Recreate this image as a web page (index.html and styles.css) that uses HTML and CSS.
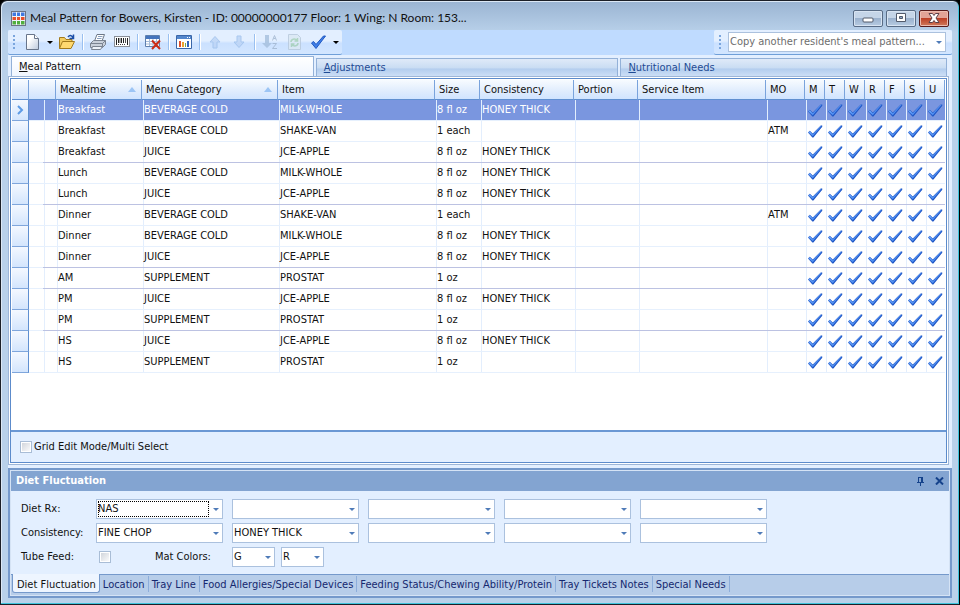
FILE: index.html
```html
<!DOCTYPE html>
<html lang="en">
<head>
    <meta charset="UTF-8">
    <meta name="viewport" content="width=device-width, initial-scale=1.0">
    <title>Meal Pattern for Bowers, Kirsten</title>
    <link rel="stylesheet" href="styles.css">
</head>
<body>
    <div class="window">
        <header class="title-bar">
            <svg class="app-icon" width="15" height="15" viewBox="0 0 15 15">
                <rect width="15" height="15" fill="#6b7385"/>
                <rect x="1" y="1" width="13" height="13" fill="#f0f3f9"/>
                <path d="M1.5 1.5H5V5H1.500zM6 1.500h3V5H6zM10 1.500h3.500V5H10z" fill="#3f78e0"/>
                <path d="M1.500 6H5v3H1.500zM6 6h3v3H6zM10 6h3.500v3H10z" fill="#e8502c"/>
                <path d="M1.500 10H5v3.500H1.500zM6 10h3v3.500H6zM10 10h3.500v3.500H10z" fill="#4fae3c"/>
            </svg>
            <h1>Meal Pattern for Bowers, Kirsten - ID: 00000000177 Floor: 1 Wing: N Room: 153...</h1>
            <div class="window-buttons">
                <button type="button" aria-label="Minimize">
                    <svg width="16" height="12" viewBox="0 0 16 12"><rect x="3" y="6" width="10" height="4" rx="1" fill="#fff" stroke="#525a6b"/></svg>
                </button>
                <button type="button" aria-label="Maximize">
                    <svg width="16" height="12" viewBox="0 0 16 12"><path d="M3.5 1.5h9v8h-9z" fill="#fff" stroke="#525a6b"/><path d="M6.5 4.5h3v2h-3z" fill="#8fa9c8" stroke="#525a6b"/></svg>
                </button>
                <button type="button" class="close" aria-label="Close">
                    <svg width="16" height="12" viewBox="0 0 16 12"><path d="M3 1.5h3.5L8 3.5l1.5-2H13L10 6l3 4.5H9.5L8 8.5l-1.5 2H3L6 6z" fill="#fff" stroke="#5c4048"/></svg>
                </button>
            </div>
        </header>

        <main class="content">
            <div class="toolbars">
                <div class="toolbar">
                    <span class="grip"></span>
                    <button type="button" aria-label="New">
                        <svg width="16" height="16" viewBox="0 0 16 16"><path d="M2.5.5h8l4 4v11h-12z" fill="url(#paper)" stroke="#68758b"/><path d="M10.5.5v4h4" fill="#fff" stroke="#68758b"/></svg>
                    </button>
                    <button type="button" class="caret" aria-label="New options"></button>
                    <button type="button" aria-label="Open">
                        <svg width="16" height="16" viewBox="0 0 16 16"><path d="M.5 14.5v-11h5l1.5 2h6v3" fill="#f3cd62" stroke="#a27a1c"/><path d="M.5 14.5l3-7h12l-3.5 7z" fill="#ffd970" stroke="#a27a1c"/><path d="M9 3c1.5-2 3.5-2 5 .5M14.5.5v4h-4" fill="none" stroke="#1d4fa8" stroke-width="1.5"/></svg>
                    </button>
                    <span class="separator"></span>
                    <button type="button" aria-label="Print">
                        <svg width="16" height="16" viewBox="0 0 16 16"><path d="M4.5 7L7 .5h7.5L12 7z" fill="#fff" stroke="#6c7787"/><path d="M8 2.5h4.5M7 4.5h4.5" stroke="#8aa0c0"/><path d="M.5 9.5l3-3h12v4l-3 3H.5z" fill="#c9d0da" stroke="#7a8390"/><path d="M.5 9.5h12l3-3M12.5 9.5v4" fill="none" stroke="#7a8390"/><path d="M2.5 12.5l-1 3h9l2-3z" fill="#edf2f9" stroke="#7a8390"/></svg>
                    </button>
                    <button type="button" aria-label="Barcode">
                        <svg width="16" height="16" viewBox="0 0 16 16"><rect x=".5" y="2.5" width="15" height="10" fill="#fff" stroke="#8a8f98"/><path d="M2.5 4v7M4.5 4v5M7.5 4v5M9.5 4v5M13.5 4v7" stroke="#222"/><path d="M6 4v5M11.5 4v5" stroke="#555"/><path d="M4 10.5h8" stroke="#444" stroke-dasharray="1 1"/></svg>
                    </button>
                    <span class="separator"></span>
                    <button type="button" aria-label="Delete row">
                        <svg width="16" height="16" viewBox="0 0 16 16"><path d="M.5 1.5h14v11H.5z" fill="#fff" stroke="#5d7fae"/><path d="M1 2h13v3H1z" fill="#4474bd"/><path d="M1 7.5h13M1 10h13M4.5 5v7M8 5v7M11.5 5v7" stroke="#a5bbd8"/><path d="M7 6.5l8 8.5M15 6.5L7 15" stroke="#cc2a13" stroke-width="2"/></svg>
                    </button>
                    <span class="separator"></span>
                    <button type="button" aria-label="Report">
                        <svg width="16" height="16" viewBox="0 0 16 16"><path d="M.5 1.5h15v13H.5z" fill="#fff" stroke="#3a66a8"/><path d="M1 2h14v3H1z" fill="#5386cc"/><path d="M11 3.5h1M13 3.5h1" stroke="#fff"/><path d="M3 7h2v6H3z" fill="#e0502a"/><path d="M6 8h2v5H6z" fill="#eda02d"/><path d="M9 9h1v4H9z" fill="#78a84a"/><path d="M11 7h2v6h-2z" fill="#3465bd"/></svg>
                    </button>
                    <span class="separator"></span>
                    <button type="button" aria-label="Move up" disabled>
                        <svg width="16" height="16" viewBox="0 0 16 16"><path d="M8 2.5l5 5.5h-3v6H6V8H3z" fill="#bcd4f6" stroke="#9cbfec"/></svg>
                    </button>
                    <button type="button" aria-label="Move down" disabled>
                        <svg width="16" height="16" viewBox="0 0 16 16"><path d="M8 13.5L3 8h3V2h4v6h3z" fill="#bcd4f6" stroke="#9cbfec"/></svg>
                    </button>
                    <span class="separator"></span>
                    <button type="button" aria-label="Sort" disabled>
                        <svg width="16" height="16" viewBox="0 0 16 16"><path d="M3 1h4v8h3l-5 5-5-5h3z" fill="#a5bfdd"/><path d="M10.5 6.5l2-5 2 5M11.5 4.5h2M10.5 9.5h4l-4 5H15" fill="none" stroke="#9fb4ce"/></svg>
                    </button>
                    <button type="button" aria-label="Refresh" disabled>
                        <svg width="16" height="16" viewBox="0 0 16 16"><path d="M2.5.5h9l3 3v12h-12z" fill="#dbe8f3" stroke="#b7c8da"/><path d="M5 8c0-3 4-4 6-1.5M11.5 4v3h-3M12 9c0 3-4 4-6 1.5M5.5 13v-3h3" fill="none" stroke="#a3cfb4" stroke-width="1.5"/></svg>
                    </button>
                    <button type="button" aria-label="Apply">
                        <svg width="16" height="16" viewBox="0 0 16 16"><path d="M1.500 9L3.500 7.500 6 10.500l7.500-8.500h2L6 14.500z" fill="#3f7fe8" stroke="#1f57c0"/></svg>
                    </button>
                    <button type="button" class="caret" aria-label="Apply options"></button>
                </div>
                <div class="toolbar copy-bar">
                    <span class="grip"></span>
                    <div class="combo">
                        <select aria-label="Copy another resident's meal pattern"><option>Copy another resident's meal pattern...</option></select>
                    </div>
                </div>
            </div>

            <nav class="tabs">
                <a href="#" class="tab active"><u>M</u>eal Pattern</a>
                <a href="#" class="tab"><u>A</u>djustments</a>
                <a href="#" class="tab wide"><u>N</u>utritional Needs</a>
            </nav>

            <section class="grid-panel">
                <div class="grid-area">
                    <table class="grid">
                        <colgroup>
                            <col class="col-indicator"><col class="col-indent"><col class="col-gap">
                            <col class="col-mealtime"><col class="col-category"><col>
                            <col class="col-size"><col class="col-consistency"><col class="col-portion">
                            <col class="col-service"><col class="col-mo">
                            <col class="col-day" span="7">
                        </colgroup>
                        <thead>
                            <tr>
                                <th></th>
                                <th colspan="2"></th>
                                <th class="sorted">Mealtime</th>
                                <th class="sorted">Menu Category</th>
                                <th>Item</th>
                                <th>Size</th>
                                <th>Consistency</th>
                                <th>Portion</th>
                                <th>Service Item</th>
                                <th>MO</th>
                                <th>M</th>
                                <th>T</th>
                                <th>W</th>
                                <th>R</th>
                                <th>F</th>
                                <th>S</th>
                                <th>U</th>
                            </tr>
                        </thead>
                        <tbody id="mealRows"></tbody>
                    </table>
                </div>
                <div class="grid-footer">
                    <input type="checkbox" class="box" id="gridEdit">
                    <label for="gridEdit">Grid Edit Mode/Multi Select</label>
                </div>
            </section>

            <section class="dock">
                <div class="dock-title">
                    <h2>Diet Fluctuation</h2>
                    <button type="button" aria-label="Pin">
                        <svg width="9" height="11" viewBox="0 0 9 11"><path d="M2.5 1v5M2 1.5h4M1 6.5h7M4.5 7v3" stroke="#15428b" fill="none"/><path d="M5 1h2v5H5z" fill="#15428b"/></svg>
                    </button>
                    <button type="button" aria-label="Close panel">
                        <svg width="9" height="8" viewBox="0 0 9 8"><path d="M1 .5l7 7M8 .5l-7 7" stroke="#15428b" stroke-width="2"/></svg>
                    </button>
                </div>
                <form class="diet-form">
                    <div class="field-row">
                        <label for="diet1">Diet Rx:</label>
                        <div class="combo focused"><select id="diet1"><option>NAS</option></select></div>
                        <div class="combo"><select aria-label="Diet Rx 2"><option></option></select></div>
                        <div class="combo"><select aria-label="Diet Rx 3"><option></option></select></div>
                        <div class="combo"><select aria-label="Diet Rx 4"><option></option></select></div>
                        <div class="combo"><select aria-label="Diet Rx 5"><option></option></select></div>
                    </div>
                    <div class="field-row">
                        <label for="consistency1">Consistency:</label>
                        <div class="combo"><select id="consistency1"><option>FINE CHOP</option></select></div>
                        <div class="combo"><select aria-label="Consistency 2"><option>HONEY THICK</option></select></div>
                        <div class="combo"><select aria-label="Consistency 3"><option></option></select></div>
                        <div class="combo"><select aria-label="Consistency 4"><option></option></select></div>
                        <div class="combo"><select aria-label="Consistency 5"><option></option></select></div>
                    </div>
                    <div class="field-row">
                        <label for="tubeFeed">Tube Feed:</label>
                        <div class="tube-cell">
                            <input type="checkbox" class="box" id="tubeFeed">
                            <label for="mat1">Mat Colors:</label>
                        </div>
                        <div class="mat-colors">
                            <div class="combo"><select id="mat1"><option>G</option></select></div>
                            <div class="combo"><select aria-label="Mat color 2"><option>R</option></select></div>
                        </div>
                    </div>
                </form>
                <nav class="dock-tabs">
                    <a href="#" class="active">Diet Fluctuation</a>
                    <a href="#">Location</a>
                    <a href="#">Tray Line</a>
                    <a href="#">Food Allergies/Special Devices</a>
                    <a href="#">Feeding Status/Chewing Ability/Protein</a>
                    <a href="#">Tray Tickets Notes</a>
                    <a href="#">Special Needs</a>
                </nav>
            </section>
        </main>
    </div>

    <svg class="defs" width="0" height="0">
        <linearGradient id="paper" x2="1" y2="1"><stop offset=".3" stop-color="#fff"/><stop offset="1" stop-color="#bcc9dd"/></linearGradient>
    </svg>
    <script src="app.js"></script>
</body>
</html>
```
FILE: styles.css
```css
* {
    box-sizing: border-box;
    margin: 0;
    padding: 0;
}

body {
    font-family: "DejaVu Sans Condensed", Tahoma, sans-serif;
    font-size: 11px;
    line-height: 14px;
    color: #111;
    background: #000;
}

button, select {
    font: inherit;
    color: inherit;
    border: none;
    background: none;
}

a {
    text-decoration: none;
}

.defs {
    position: absolute;
}

.window {
    display: flex;
    flex-direction: column;
    min-height: 100vh;
    padding: 0 6px 6px;
    border: 1px solid #1b1f27;
    border-right-color: #000;
    border-radius: 7px 7px 0 0;
    background: linear-gradient(#9ab4d2, #b9d1ea 32px);
    box-shadow: inset -1px -1px #3fc4dc, inset 1px 1px #dce8f5;
}

/* title bar */
.title-bar {
    display: flex;
    align-items: center;
    height: 29px;
    padding: 5px 4px 0;
}

.title-bar h1 {
    flex: 1;
    margin-left: 4px;
    font-family: Lato, "Segoe UI", sans-serif;
    font-size: 12px;
    font-weight: normal;
    line-height: 16px;
    color: #111;
}

.window-buttons {
    display: flex;
    gap: 3px;
}

.window-buttons button {
    width: 30px;
    height: 17px;
    border: 1px solid #586b85;
    border-radius: 2px;
    background: linear-gradient(#c5d5e8 50%, #9bb2ce 50%, #b7cbe2);
    box-shadow: inset 0 0 0 1px #d8e4f2;
}

.window-buttons .close {
    border-color: #571b1b;
    background: linear-gradient(#e2a396 50%, #bd4026 50%, #cf7a5c);
    box-shadow: inset 0 0 0 1px #ecbcb0;
}

.window-buttons svg {
    display: block;
    margin: auto;
}

.content {
    flex: 1;
    display: flex;
    flex-direction: column;
    margin: 0 1px;
    background: #e3efff;
}

/* toolbars */
.toolbars {
    display: flex;
    justify-content: space-between;
    height: 25px;
    background: #bfdbff;
}

.toolbar {
    display: flex;
    align-items: center;
    padding: 0 1px 0 5px;
    border-bottom: 1px solid #6f9fd8;
    border-radius: 2px;
    background: linear-gradient(#e3efff 45%, #cbe1ff 55%, #d3e6ff);
}

.toolbar button {
    width: 24px;
    height: 22px;
    padding: 3px 4px;
}

.toolbar button svg {
    display: block;
}

.toolbar button:disabled {
    opacity: .8;
}

.toolbar .caret {
    width: 11px;
    padding: 0;
}

.caret::before {
    content: "";
    display: block;
    width: 0;
    margin: auto;
    border: 3px solid transparent;
    border-top-color: #000;
    border-bottom: none;
}

.grip {
    width: 2px;
    height: 14px;
    margin-right: 5px;
    background: repeating-linear-gradient(#7aa5dd 0 2px, transparent 2px 4px);
}

.separator {
    width: 7px;
    height: 16px;
    background: linear-gradient(#9ac0f0, #9ac0f0) 3px 0 / 1px 100% no-repeat, linear-gradient(#fff, #fff) 4px 0 / 1px 100% no-repeat;
}

.copy-bar {
    width: 238px;
    padding-right: 6px;
}

.copy-bar .combo {
    flex: 1;
    margin-left: 2px;
}

.copy-bar select {
    color: #6d6d6d;
}

/* drop-downs and tick boxes */
.combo {
    position: relative;
    width: 127px;
    height: 20px;
}

.combo select {
    display: block;
    width: 100%;
    height: 100%;
    padding: 0 16px 0 1px;
    border: 1px solid #abc1de;
    background: #fff;
    appearance: none;
    outline: none;
}

.combo::after {
    content: "";
    position: absolute;
    right: 4px;
    top: 9px;
    border: 3px solid transparent;
    border-top-color: #4f7bb8;
    border-bottom: none;
    pointer-events: none;
}

.combo.focused::before {
    content: "";
    position: absolute;
    inset: 2px 14px 2px 2px;
    border: 1px dotted #000;
    pointer-events: none;
}

.box {
    width: 12px;
    height: 12px;
    border: 1px solid #a9bdd6;
    background: linear-gradient(135deg, #cdd1d8, #fff);
    box-shadow: inset 0 0 0 1px #fff;
    appearance: none;
}

/* tab strip */
.tabs {
    display: flex;
    gap: 2px;
    padding: 1px 5px 0 3px;
}

.tab {
    flex: 12 0 0;
    height: 19px;
    margin-top: 2px;
    padding: 2px 7px;
    border: 1px solid #93b1d8;
    border-bottom: none;
    background: linear-gradient(#dfeaf8, #c9dcf3 50%, #b3cdee 55%, #cfe1f7);
    color: #1f4b94;
}

.tab.wide {
    flex-grow: 13;
}

.tab.active {
    height: 21px;
    margin-top: 0;
    padding-top: 3px;
    background: linear-gradient(#fff, #eff5ff);
    color: #111;
}

/* meal grid */
.grid-panel {
    flex: 1;
    display: flex;
    flex-direction: column;
    margin: 1px 5px 5px 2px;
    border: 1px solid #5c8bcb;
    box-shadow: 0 0 0 1px #fff, 0 0 0 2px #9db6d8;
}

.grid-area {
    flex: 1;
    padding: 1px 1px 0;
    background: #fff;
}

.grid {
    width: 100%;
    table-layout: fixed;
    border-collapse: separate;
    border-spacing: 0;
}

.col-indicator { width: 17px; }
.col-indent { width: 14px; }
.col-gap { width: 13px; }
.col-mealtime { width: 86px; }
.col-category { width: 136px; }
.col-size { width: 45px; }
.col-consistency { width: 94px; }
.col-portion { width: 64px; }
.col-service { width: 128px; }
.col-mo { width: 39px; }
.col-day { width: 20px; }

.grid th {
    height: 20px;
    padding: 0 4px;
    border-right: 1px solid #79a3dc;
    border-bottom: 1px solid #5f8fd0;
    background: linear-gradient(#f7fbff, #dfecfd 60%, #d0e4ff);
    font-weight: normal;
    text-align: left;
    white-space: nowrap;
}

.grid th.sorted {
    position: relative;
}

.grid th.sorted::after {
    content: "";
    position: absolute;
    right: 5px;
    top: 7px;
    border: 4px solid transparent;
    border-bottom: 5px solid #9cc5f5;
    border-top: none;
}

.grid td {
    height: 21px;
    padding: 0 0 0 2px;
    border-bottom: 1px solid #e6f0fd;
    background: linear-gradient(#e3eefd, #e3eefd) 1px 0 / 1px 100% no-repeat;
    white-space: nowrap;
    overflow: hidden;
}

.grid td.indent {
    background: none;
}

.grid tr.group-end td {
    border-bottom-color: #bcc2e2;
}

.grid tr.group-end td.indent {
    border-bottom-color: #e6f0fd;
}

.grid td.indicator, .grid tr.group-end td.indicator {
    padding: 0;
    border-right: 1px solid #5f8fd0;
    border-bottom: 1px solid #7fa6dc;
    background: linear-gradient(#f4f8ff, #d3e5fd);
}

.grid tr.selected td:not(.indicator) {
    color: #fff;
    background-color: #7a96df;
}

.indicator svg {
    display: block;
    margin: auto;
}

.day {
    display: block;
    width: 15px;
    height: 14px;
    margin-left: 1px;
    background: #2057c6;
    clip-path: polygon(0 60%, 12% 48%, 32% 68%, 85% 10%, 95% 10%, 95% 20%, 36% 97%, 29% 97%);
    appearance: none;
}

.day::before {
    content: "";
    display: block;
    height: 100%;
    background: linear-gradient(135deg, #8dbcff, #4a8bf0 60%, #3a75e4);
    clip-path: polygon(3% 60%, 12% 50%, 32% 73%, 86% 11%, 93% 11%, 32% 87%);
}

.grid-footer {
    display: flex;
    align-items: center;
    gap: 2px;
    height: 32px;
    padding-left: 9px;
    border-top: 2px solid #6b98d4;
    background: #e3efff;
}

/* docked panel */
.dock {
    border: 2px solid #7599cb;
    box-shadow: inset 0 0 0 1px #d5e3f5;
    padding: 1px;
    background: #e3efff;
}

.dock-title {
    display: flex;
    align-items: center;
    gap: 10px;
    height: 20px;
    padding: 0 5px;
    background: #83a4d1;
}

.dock-title h2 {
    flex: 1;
    font-size: 11px;
    color: #fff;
}

.dock-title svg {
    display: block;
}

.diet-form {
    display: flex;
    flex-direction: column;
    gap: 4px;
    padding: 8px 10px 7px;
}

.field-row {
    display: flex;
    align-items: center;
    gap: 9px;
}

.field-row label {
    white-space: nowrap;
}

.field-row > label {
    width: 66px;
}

.tube-cell {
    display: flex;
    align-items: center;
    gap: 44px;
    width: 127px;
    padding-left: 3px;
}

.mat-colors {
    display: flex;
    gap: 6px;
}

.mat-colors .combo {
    width: 43px;
}

.dock-tabs {
    display: flex;
    height: 21px;
    border-top: 1px solid #7599cb;
    background: #b7cde9;
}

.dock-tabs a {
    height: 16px;
    margin-top: 1px;
    padding: 2px 3px 0;
    border-right: 1px solid #8daedb;
    color: #15286f;
    white-space: nowrap;
}

.dock-tabs .active {
    height: 19px;
    margin: -1px 0 0 1px;
    padding: 4px 3px 0 4px;
    border: 1px solid #7599cb;
    border-top: none;
    border-radius: 0 0 3px 3px;
    background: #eef5ff;
    color: #111;
}
```
FILE: app.js
```js
const meals = [
    ["Breakfast", "BEVERAGE COLD", "MILK-WHOLE", "8 fl oz", "HONEY THICK", ""],
    ["Breakfast", "BEVERAGE COLD", "SHAKE-VAN", "1 each", "", "ATM"],
    ["Breakfast", "JUICE", "JCE-APPLE", "8 fl oz", "HONEY THICK", ""],
    ["Lunch", "BEVERAGE COLD", "MILK-WHOLE", "8 fl oz", "HONEY THICK", ""],
    ["Lunch", "JUICE", "JCE-APPLE", "8 fl oz", "HONEY THICK", ""],
    ["Dinner", "BEVERAGE COLD", "SHAKE-VAN", "1 each", "", "ATM"],
    ["Dinner", "BEVERAGE COLD", "MILK-WHOLE", "8 fl oz", "HONEY THICK", ""],
    ["Dinner", "JUICE", "JCE-APPLE", "8 fl oz", "HONEY THICK", ""],
    ["AM", "SUPPLEMENT", "PROSTAT", "1 oz", "", ""],
    ["PM", "JUICE", "JCE-APPLE", "8 fl oz", "HONEY THICK", ""],
    ["PM", "SUPPLEMENT", "PROSTAT", "1 oz", "", ""],
    ["HS", "JUICE", "JCE-APPLE", "8 fl oz", "HONEY THICK", ""],
    ["HS", "SUPPLEMENT", "PROSTAT", "1 oz", "", ""]
];
const days = ["Monday", "Tuesday", "Wednesday", "Thursday", "Friday", "Saturday", "Sunday"];
const arrow = '<svg width="8" height="10" viewBox="0 0 8 10"><path d="M2 1l4 4-4 4" fill="none" stroke="#5d9be6" stroke-width="2"/></svg>';

const mealRows = document.getElementById("mealRows");

meals.forEach((meal, i) => {
    const [time, category, item, size, consistency, mo] = meal;
    const row = document.createElement("tr");
    const next = meals[i + 1];

    if (i === 0) row.classList.add("selected");
    // darker line under the last row of each mealtime
    if (next && next[0] !== time) row.classList.add("group-end");

    const cells = [time, category, item, size, consistency, "", "", mo];
    row.innerHTML =
        `<td class="indicator">${i === 0 ? arrow : ""}</td><td class="indent"></td><td></td>` +
        cells.map(text => `<td>${text}</td>`).join("") +
        days.map(day => `<td><input type="checkbox" class="day" checked aria-label="${day}"></td>`).join("");
    mealRows.appendChild(row);
});
```
